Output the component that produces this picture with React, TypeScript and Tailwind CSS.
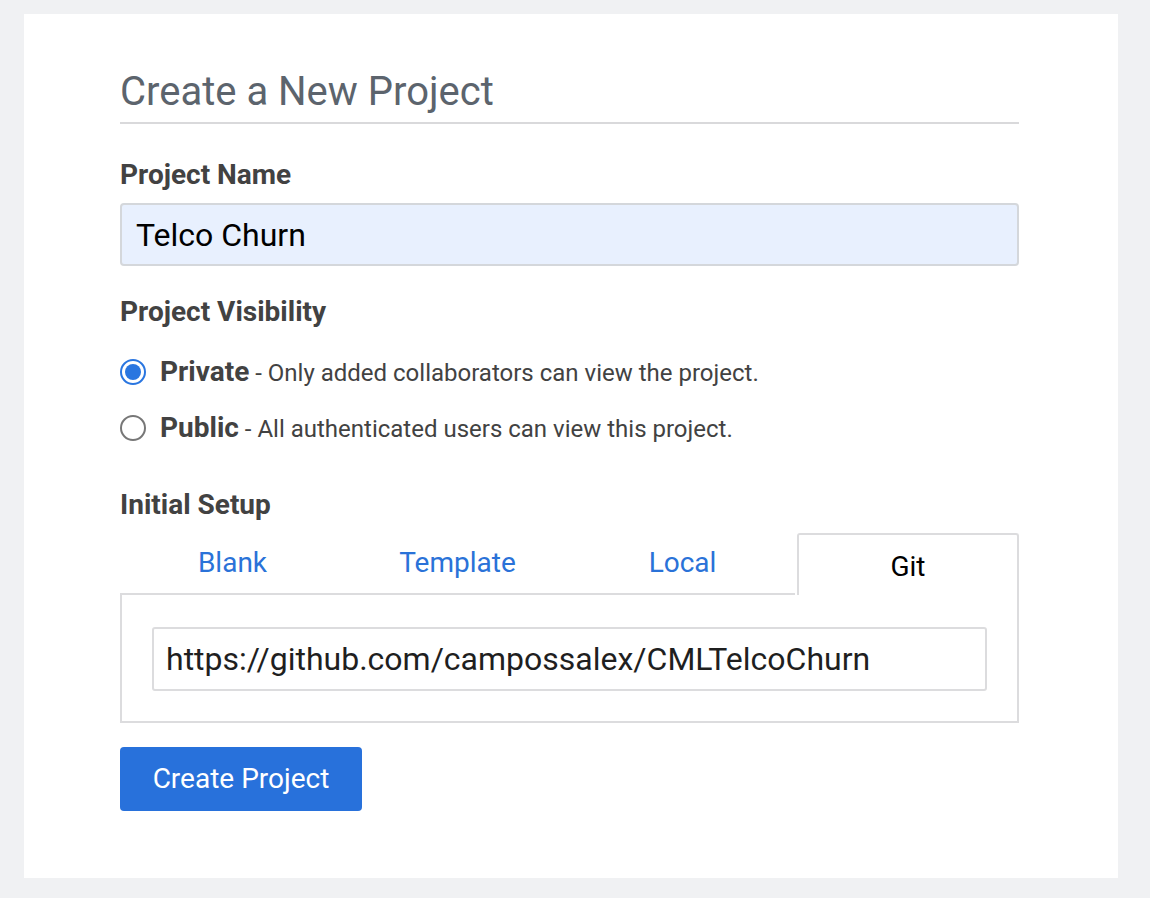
export default function App() {
  const tabs = ["Blank", "Template", "Local", "Git"];
  const active = "Git";

  return (
    <main
      className="min-h-[898px] bg-[#f0f1f3] pt-[14px] pl-[24px] pr-[32px] pb-[20px]"
      style={{ fontFamily: "Roboto, 'Liberation Sans', sans-serif" }}
    >
      <div className="bg-white w-[1094px] h-[864px] pl-[96px] pr-[99px] pt-[54px]">
        <h1 className="text-[40px] leading-[48px] text-[#5c646d] pb-[6px] border-b-2 border-[#d9d9db]">
          Create a New Project
        </h1>

        <label className="block mt-[36px] text-[28px] leading-[30px] font-bold text-[#424242]">
          Project Name
        </label>
        <div className="mt-[13px] h-[63px] flex items-center px-[14px] bg-[#e8f0fe] border-2 border-[#d4d7db] rounded-[4px] text-[32px] text-black">
          Telco Churn
        </div>

        <label className="block mt-[31px] text-[28px] leading-[30px] font-bold text-[#424242]">
          Project Visibility
        </label>

        <div className="mt-[32px] flex flex-col gap-[30px]">
          <div className="flex items-center gap-[14px] h-[26px]">
            <span className="w-[26px] h-[26px] rounded-full border-2 border-[#2a76e0] flex items-center justify-center">
              <span className="w-[16px] h-[16px] rounded-full bg-[#2a76e0]" />
            </span>
            <span className="text-[#424242] whitespace-nowrap">
              <b className="text-[28px] font-bold">Private</b>
              <span className="text-[24px]"> - Only added collaborators can view the project.</span>
            </span>
          </div>
          <div className="flex items-center gap-[14px] h-[26px]">
            <span className="w-[26px] h-[26px] rounded-full border-2 border-[#777]" />
            <span className="text-[#424242] whitespace-nowrap">
              <b className="text-[28px] font-bold">Public</b>
              <span className="text-[24px]"> - All authenticated users can view this project.</span>
            </span>
          </div>
        </div>

        <label className="block mt-[49px] text-[28px] leading-[30px] font-bold text-[#424242]">
          Initial Setup
        </label>

        <div className="mt-[13px] flex">
          {tabs.map((t) =>
            t === active ? (
              <div
                key={t}
                className="flex-1 ml-[2px] h-[62px] flex items-center justify-center border-2 border-b-0 border-[#dcdcde] rounded-t-[3px] text-[28px] text-black pt-[3px]"
              >
                {t}
              </div>
            ) : (
              <div
                key={t}
                className="w-[225px] h-[62px] flex items-center justify-center border-b-2 border-[#dcdcde] text-[28px] text-[#2a72d8]"
              >
                {t}
              </div>
            )
          )}
        </div>
        <div className="border-2 border-t-0 border-[#dcdcde] px-[30px] pt-[32px] pb-[30px]">
          <div className="h-[64px] flex items-center px-[12px] border-2 border-[#dcdcde] rounded-[3px] text-[32px] text-[#1f1f1f]">
            https://github.com/campossalex/CMLTelcoChurn
          </div>
        </div>

        <button className="mt-[24px] w-[242px] h-[64px] bg-[#2871db] text-white text-[28px] rounded-[4px]">
          Create Project
        </button>
      </div>
    </main>
  );
}
